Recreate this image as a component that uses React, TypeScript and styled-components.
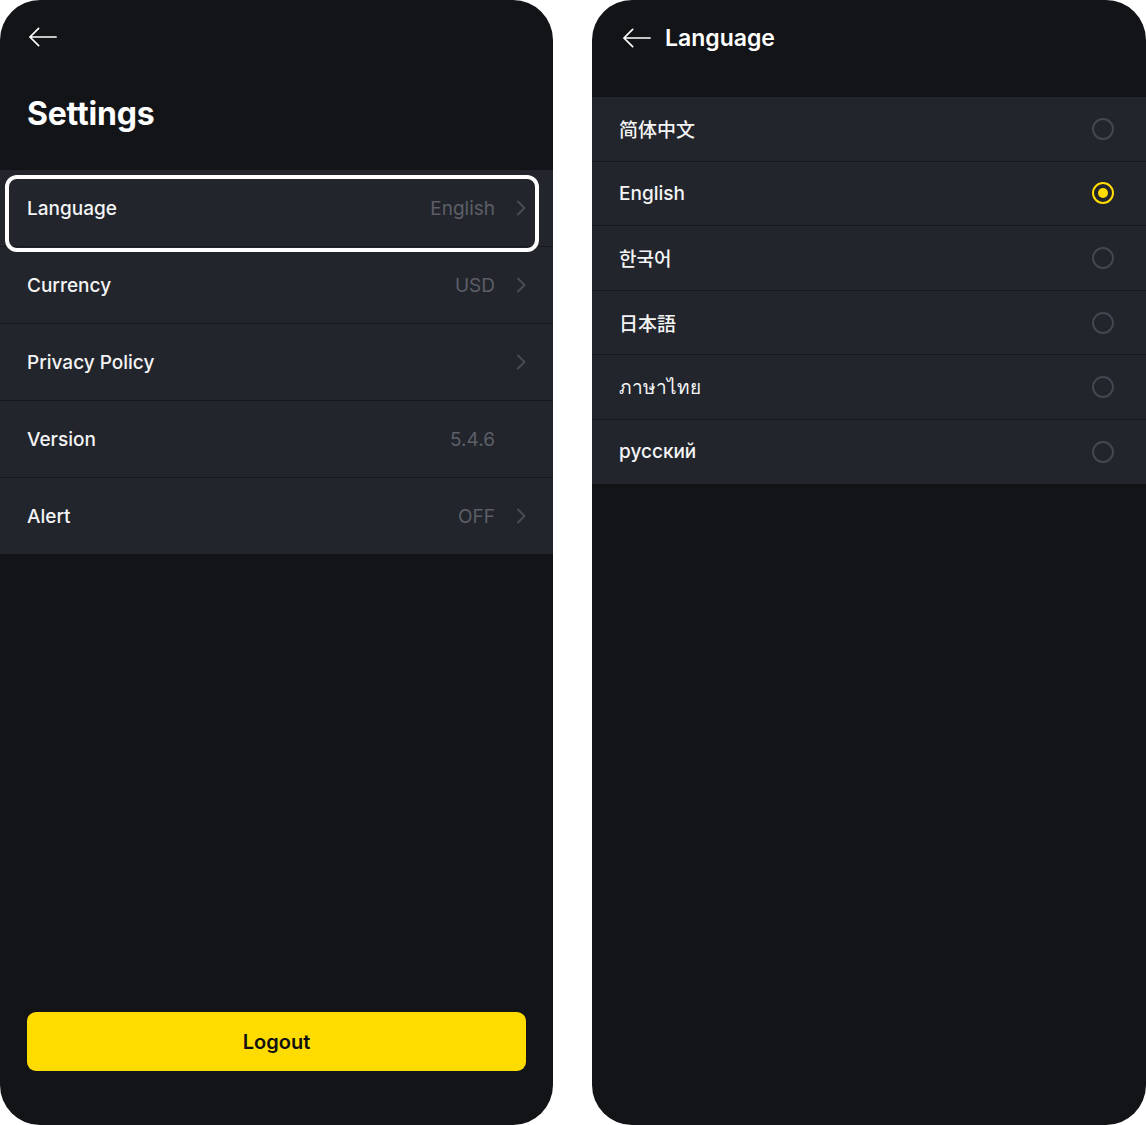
import React, { useState } from "react";
import styled, { createGlobalStyle } from "styled-components";

const GlobalStyle = createGlobalStyle`
  html, body {
    margin: 0;
    padding: 0;
    background: #ffffff;
  }
  body {
    font-family: Inter, "Noto Sans", "Noto Sans CJK SC", sans-serif;
  }
  * {
    box-sizing: border-box;
  }
`;

type SettingItem = {
  label: string;
  value?: string;
  chevron: boolean;
};

const settings: SettingItem[] = [
  { label: "Language", value: "English", chevron: true },
  { label: "Currency", value: "USD", chevron: true },
  { label: "Privacy Policy", chevron: true },
  { label: "Version", value: "5.4.6", chevron: false },
  { label: "Alert", value: "OFF", chevron: true },
];

const languages = [
  { label: "简体中文", font: '"Noto Sans CJK SC"' },
  { label: "English", font: "Inter" },
  { label: "한국어", font: '"Noto Sans CJK KR"' },
  { label: "日本語", font: '"Noto Sans CJK JP"' },
  { label: "ภาษาไทย", font: '"Noto Sans"' },
  { label: "русский", font: "Inter" },
];

function BackArrow() {
  return (
    <svg width="30" height="22" viewBox="0 0 30 22" fill="none">
      <path
        d="M29 11H2M11 2L2 11L11 20"
        stroke="#ffffff"
        strokeWidth="1.8"
        strokeLinecap="round"
        strokeLinejoin="round"
      />
    </svg>
  );
}

function Chevron() {
  return (
    <svg width="10" height="16" viewBox="0 0 10 16" fill="none">
      <path
        d="M2 1.5L8.5 8L2 14.5"
        stroke="#4a4d55"
        strokeWidth="1.8"
        strokeLinecap="round"
        strokeLinejoin="round"
      />
    </svg>
  );
}

function App() {
  const [selected, setSelected] = useState("English");

  return (
    <>
      <GlobalStyle />
      <Page>
        <Phone>
          <SettingsHeader>
            <BackButton>
              <BackArrow />
            </BackButton>
            <Title>Settings</Title>
          </SettingsHeader>
          <List>
            {settings.map((item, i) => (
              <SettingRow key={item.label}>
                <RowLabel>{item.label}</RowLabel>
                <RowRight>
                  {item.value && <RowValue>{item.value}</RowValue>}
                  <ChevronSlot>{item.chevron && <Chevron />}</ChevronSlot>
                </RowRight>
                {i === 0 && <FocusRing />}
              </SettingRow>
            ))}
          </List>
          <Spacer />
          <LogoutButton>Logout</LogoutButton>
        </Phone>

        <Phone $grow>
          <LanguageHeader>
            <BackButton>
              <BackArrow />
            </BackButton>
            <HeaderTitle>Language</HeaderTitle>
          </LanguageHeader>
          <List>
            {languages.map((lang) => (
              <LanguageRow key={lang.label} onClick={() => setSelected(lang.label)}>
                <LanguageLabel $font={lang.font}>{lang.label}</LanguageLabel>
                <Radio $checked={selected === lang.label} />
              </LanguageRow>
            ))}
          </List>
        </Phone>
      </Page>
    </>
  );
}
export default App;

const Page = styled.div`
  display: flex;
  gap: 39px;
  width: 1146px;
  height: 1125px;
`;

const Phone = styled.div<{ $grow?: boolean }>`
  width: 553px;
  height: 1125px;
  flex: ${(p) => (p.$grow ? "1 1 auto" : "0 0 553px")};
  background: #121418;
  border-radius: 40px;
  overflow: hidden;
  display: flex;
  flex-direction: column;
`;

const SettingsHeader = styled.div`
  height: 170px;
  padding: 22px 27px 0;
  display: flex;
  flex-direction: column;
  align-items: flex-start;
`;

const BackButton = styled.div`
  width: 30px;
  height: 30px;
  display: flex;
  align-items: center;
  justify-content: flex-start;
  padding-left: 1px;
`;

const Title = styled.h1`
  margin: 42px 0 0;
  font-size: 32px;
  line-height: 40px;
  font-weight: 700;
  color: #ffffff;
  letter-spacing: -0.2px;
`;

const List = styled.div`
  display: flex;
  flex-direction: column;
  gap: 1px;
  background: #16181d;
`;

const SettingRow = styled.div`
  position: relative;
  height: 76px;
  padding: 0 27px;
  background: #22252c;
  display: flex;
  align-items: center;
  justify-content: space-between;
`;

const FocusRing = styled.div`
  position: absolute;
  top: 5px;
  left: 5px;
  right: 14px;
  bottom: -6px;
  border: 4px solid #ffffff;
  border-radius: 12px;
  z-index: 2;
  pointer-events: none;
`;

const RowLabel = styled.span`
  font-size: 19px;
  font-weight: 500;
  color: #f4f4f5;
`;

const RowRight = styled.div`
  display: flex;
  align-items: center;
  gap: 19px;
`;

const RowValue = styled.span`
  font-size: 19px;
  font-weight: 400;
  color: #5c5f67;
`;

const ChevronSlot = styled.div`
  width: 12px;
  display: flex;
  justify-content: flex-end;
  align-items: center;
`;

const Spacer = styled.div`
  flex: 1;
`;

const LogoutButton = styled.button`
  margin: 0 27px 54px;
  height: 59px;
  border: none;
  border-radius: 9px;
  background: #ffdc00;
  color: #111111;
  font-family: Inter, sans-serif;
  font-size: 20px;
  font-weight: 600;
  cursor: pointer;
`;

const LanguageHeader = styled.div`
  height: 97px;
  padding: 0 29px 21px;
  display: flex;
  align-items: center;
  gap: 14px;
`;

const HeaderTitle = styled.h2`
  margin: 0;
  font-size: 23px;
  font-weight: 600;
  color: #ffffff;
`;

const LanguageRow = styled.div`
  height: 63.6px;
  padding: 0 32px 0 27px;
  background: #22252c;
  display: flex;
  align-items: center;
  justify-content: space-between;
  cursor: pointer;
`;

const LanguageLabel = styled.span<{ $font: string }>`
  font-family: Inter, ${(p) => p.$font}, "Noto Sans", sans-serif;
  font-size: 19px;
  font-weight: 500;
  color: #f4f4f5;
`;

const Radio = styled.span<{ $checked: boolean }>`
  width: 22px;
  height: 22px;
  border-radius: 50%;
  border: 2px solid ${(p) => (p.$checked ? "#ffdc00" : "#44474f")};
  display: flex;
  align-items: center;
  justify-content: center;

  &::after {
    content: "";
    width: 10px;
    height: 10px;
    border-radius: 50%;
    background: ${(p) => (p.$checked ? "#ffdc00" : "transparent")};
  }
`;
